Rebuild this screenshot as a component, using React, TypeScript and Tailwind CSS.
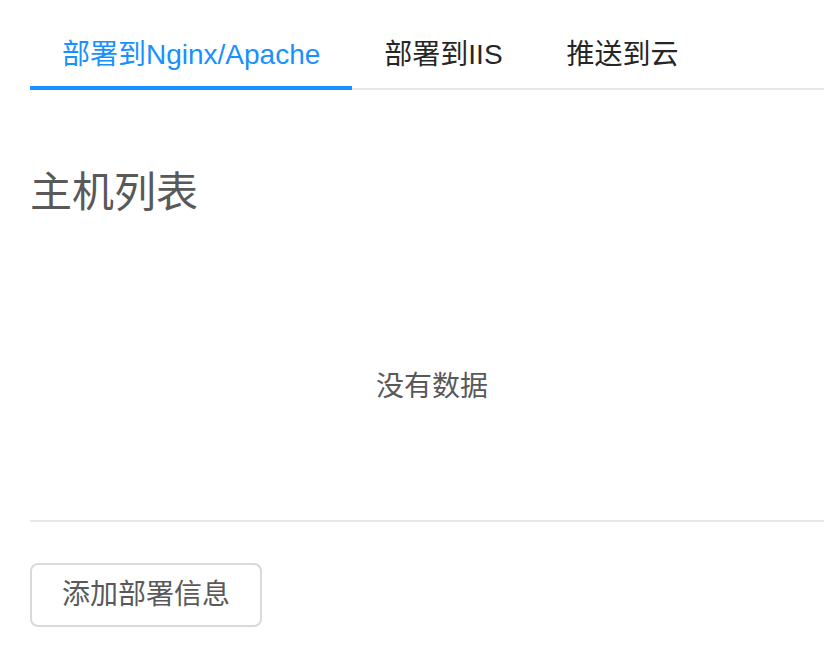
import React, { useState } from "react";

const tabs = ["部署到Nginx/Apache", "部署到IIS", "推送到云"];

export default function App() {
  const [active, setActive] = useState(0);

  return (
    <div
      className="min-h-[654px] w-[824px] overflow-hidden bg-white pl-[30px]"
      style={{ fontFamily: '"Liberation Sans", "Noto Sans CJK SC", sans-serif' }}
    >
      {/* Tabs */}
      <div className="flex border-b-2 border-[#e8e8e8]">
        {tabs.map((t, i) => (
          <button
            key={t}
            type="button"
            onClick={() => setActive(i)}
            className={`relative -mb-[2px] px-8 pt-[34px] pb-[14px] text-[28px] leading-[42px] whitespace-nowrap ${
              i === active ? "text-[#1890ff]" : "text-[#262626]"
            }`}
          >
            {t}
            {i === active && <span className="absolute bottom-0 left-0 right-0 h-1 bg-[#1890ff]" />}
          </button>
        ))}
      </div>

      {/* Host list */}
      <h2 className="mt-[74px] text-[42px] leading-[58px] text-[#595959]">主机列表</h2>

      <div className="w-[804px] border-b-2 border-[#e8e8e8] pt-[144px] pb-[112px] text-center text-[28px] leading-[42px] text-[#595959]">
        没有数据
      </div>

      <button
        type="button"
        className="mt-[41px] h-16 rounded-lg border-2 border-[#d9d9d9] bg-white px-[30px] text-[28px] leading-[42px] text-[#595959]"
      >
        添加部署信息
      </button>
    </div>
  );
}
